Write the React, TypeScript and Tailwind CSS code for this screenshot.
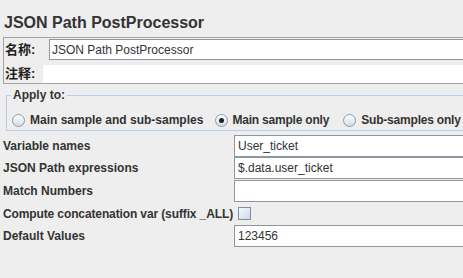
import React from 'react';

const latin = { fontFamily: '"Liberation Sans", Arial, sans-serif' };
const cjk = { fontFamily: '"Liberation Sans", "Noto Sans CJK SC", sans-serif' };

function Radio({ checked }: { checked?: boolean }) {
  return (
    <span className="relative inline-flex h-[13px] w-[13px] shrink-0 items-center justify-center rounded-full border border-[#8a9aab] bg-gradient-to-b from-[#ffffff] to-[#d2dde9]">
      {checked && <span className="h-[5px] w-[5px] rounded-full bg-[#222]" />}
    </span>
  );
}

function Field({ value }: { value?: string }) {
  return (
    <div className="flex h-[22px] flex-1 items-center border border-[#8e979f] bg-white pl-[3px] text-[12px] text-[#333]">
      {value}
    </div>
  );
}

function Row({ label, children }: { label: string; children: React.ReactNode }) {
  return (
    <div className="flex items-center">
      <div className="w-[234px] shrink-0 pl-[3px] text-[12px] font-bold text-[#333]">{label}</div>
      {children}
    </div>
  );
}

export default function App() {
  return (
    <div className="h-[278px] w-[463px] overflow-hidden bg-[#eeeeee]" style={latin}>
      <h1 className="pl-[4px] pt-[13px] text-[16px] font-bold leading-[20px] text-[#333]">JSON Path PostProcessor</h1>

      <div className="ml-[3px] mt-[4px] mr-[-20px] border border-[#a3a3a3]">
        <div className="flex items-center pt-[1px]">
          <span className="w-[45px] pl-[1px] text-[13px] font-bold leading-[20px] text-[#222]" style={cjk}>名称:</span>
          <div className="flex h-[21px] flex-1 items-center border border-[#8e979f] bg-white pl-[2px] text-[12px] text-[#333]">
            JSON Path PostProcessor
          </div>
        </div>
        <div className="mt-[5px] flex items-center">
          <span className="w-[39px] pl-[1px] text-[13px] font-bold leading-[18px] text-[#222]" style={cjk}>注释:</span>
          <div className="h-[18px] flex-1 bg-white" />
        </div>
      </div>

      <fieldset className="ml-[6px] mr-[-20px] mt-[4px] h-[43px] border border-[#b8cfe5] px-[5px]">
        <legend className="ml-[-1px] px-[2px] text-[12px] font-bold leading-[14px] text-[#333]">Apply to:</legend>
        <div className="mt-[9px] flex items-center whitespace-nowrap text-[12px] font-bold text-[#333]">
          <Radio />
          <span className="ml-[5px]">Main sample and sub-samples</span>
          <span className="ml-[12px] flex"><Radio checked /></span>
          <span className="ml-[4px] tracking-[-0.2px]">Main sample only</span>
          <span className="ml-[14px] flex"><Radio /></span>
          <span className="ml-[5px] tracking-[-0.2px]">Sub-samples only</span>
        </div>
      </fieldset>

      <div className="mr-[-20px] mt-[4px] flex flex-col">
        <Row label="Variable names"><Field value="User_ticket" /></Row>
        <Row label="JSON Path expressions"><Field value="$.data.user_ticket" /></Row>
        <div className="mt-[1px]"><Row label="Match Numbers"><Field /></Row></div>
        <div className="flex h-[23px] items-center">
          <span className="w-[234px] shrink-0 whitespace-nowrap pl-[3px] text-[12px] font-bold tracking-[-0.12px] text-[#333]">
            Compute concatenation var (suffix _ALL)
          </span>
          <span className="ml-[4px] h-[13px] w-[13px] border border-[#7f8fa0] bg-gradient-to-br from-[#f4f8fc] to-[#cfdbe8]" />
        </div>
        <Row label="Default Values"><Field value="123456" /></Row>
      </div>
    </div>
  );
}
